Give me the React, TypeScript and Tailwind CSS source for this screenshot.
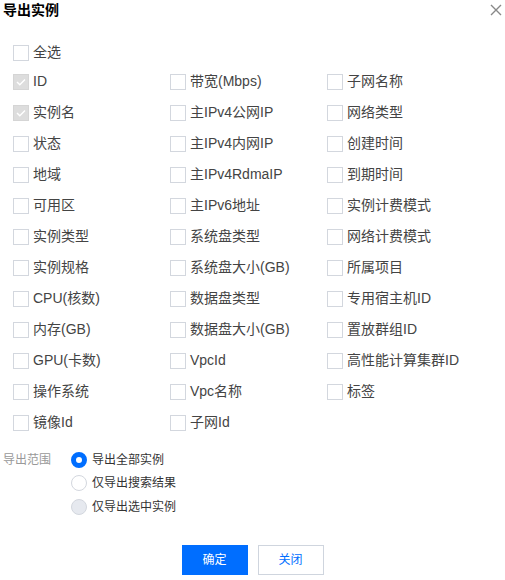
import React, { useState } from 'react';

const FONT = { fontFamily: '"Liberation Sans", "Noto Sans CJK SC", sans-serif' };

const fields: { label: string; checked?: boolean }[][] = [
  [{ label: 'ID', checked: true }, { label: '带宽(Mbps)' }, { label: '子网名称' }],
  [{ label: '实例名', checked: true }, { label: '主IPv4公网IP' }, { label: '网络类型' }],
  [{ label: '状态' }, { label: '主IPv4内网IP' }, { label: '创建时间' }],
  [{ label: '地域' }, { label: '主IPv4RdmaIP' }, { label: '到期时间' }],
  [{ label: '可用区' }, { label: '主IPv6地址' }, { label: '实例计费模式' }],
  [{ label: '实例类型' }, { label: '系统盘类型' }, { label: '网络计费模式' }],
  [{ label: '实例规格' }, { label: '系统盘大小(GB)' }, { label: '所属项目' }],
  [{ label: 'CPU(核数)' }, { label: '数据盘类型' }, { label: '专用宿主机ID' }],
  [{ label: '内存(GB)' }, { label: '数据盘大小(GB)' }, { label: '置放群组ID' }],
  [{ label: 'GPU(卡数)' }, { label: 'VpcId' }, { label: '高性能计算集群ID' }],
  [{ label: '操作系统' }, { label: 'Vpc名称' }, { label: '标签' }],
  [{ label: '镜像Id' }, { label: '子网Id' }],
];

function Checkbox({ label, checked }: { label: string; checked?: boolean }) {
  return (
    <label className="flex items-center gap-1 text-[14px] text-[#444]">
      {checked ? (
        <span className="w-4 h-4 bg-[#dddddd] border border-[#d5d5d5] flex items-center justify-center">
          <svg width="10" height="8" viewBox="0 0 10 8" fill="none">
            <path d="M1 4l2.8 2.8L9 1.5" stroke="white" strokeWidth="1.4" />
          </svg>
        </span>
      ) : (
        <span className="w-4 h-4 bg-white border border-[#d3d7de]" />
      )}
      <span>{label}</span>
    </label>
  );
}

function Radio({ label, state }: { label: string; state: 'on' | 'off' | 'disabled' }) {
  const cls =
    state === 'on'
      ? 'border-[5px] border-[#006eff] bg-white'
      : state === 'off'
        ? 'border border-[#d3d7de] bg-white'
        : 'border border-[#d3d7de] bg-[#e6e9ef]';
  return (
    <div className="flex items-center gap-[5px] h-[23.5px] text-[12px] text-[#333]">
      <span className={`w-4 h-4 rounded-full ${cls}`} />
      <span>{label}</span>
    </div>
  );
}

export default function App() {
  const [scope] = useState(0);
  return (
    <div className="w-[505px] h-[580px] bg-white relative" style={FONT}>
      {/* Header */}
      <div className="flex items-center justify-between h-5 pl-[3px] pr-[1px]">
        <h2 className="text-[14px] font-bold text-black leading-5">导出实例</h2>
        <button className="w-4 h-5 flex items-center justify-center">
          <svg width="12" height="12" viewBox="0 0 12 12">
            <path d="M1 1l10 10M11 1L1 11" stroke="#888" strokeWidth="1.4" />
          </svg>
        </button>
      </div>

      {/* Field checkboxes */}
      <div className="pl-[13px] pt-[19px]">
        <div className="h-[27px] flex items-center">
          <Checkbox label="全选" />
        </div>
        <div className="grid grid-cols-[157px_157px_157px]">
          {fields.map((row, i) =>
            [0, 1, 2].map(j => (
              <div key={`${i}-${j}`} className="h-[31px] flex items-center">
                {row[j] && <Checkbox label={row[j].label} checked={row[j].checked} />}
              </div>
            ))
          )}
        </div>
      </div>

      {/* Export range */}
      <div className="flex mt-[10px] pl-[3px]">
        <div className="w-[68px] h-[23.5px] flex items-center text-[12px] text-[#999]">导出范围</div>
        <div className="flex flex-col">
          <Radio label="导出全部实例" state={scope === 0 ? 'on' : 'off'} />
          <Radio label="仅导出搜索结果" state="off" />
          <Radio label="仅导出选中实例" state="disabled" />
        </div>
      </div>

      {/* Footer */}
      <div className="flex justify-center gap-[10px] mt-[26px]">
        <button className="w-[66px] h-[30px] bg-[#006eff] text-white text-[12px]">确定</button>
        <button className="w-[66px] h-[30px] bg-white border border-[#cfd5de] text-[#006eff] text-[12px]">关闭</button>
      </div>
    </div>
  );
}
